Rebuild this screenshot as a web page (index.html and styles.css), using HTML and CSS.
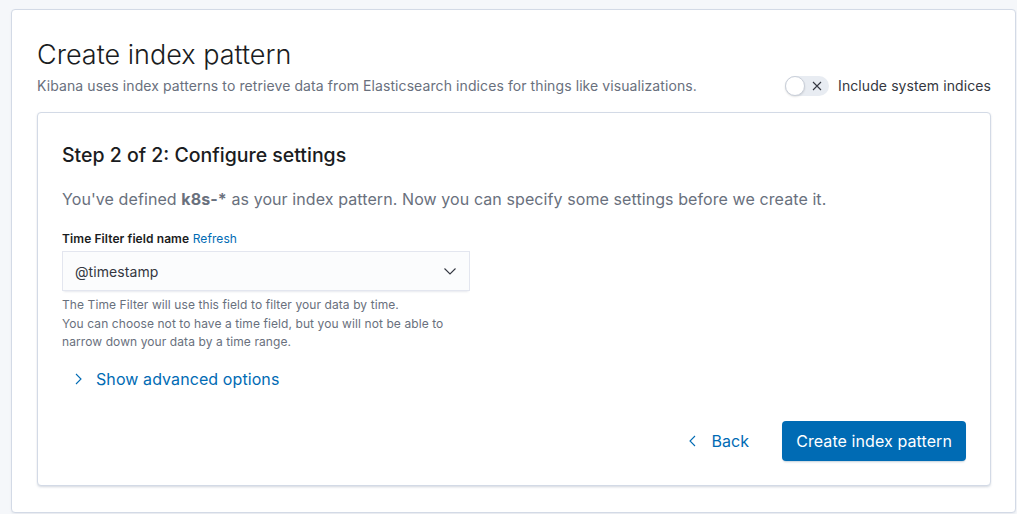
FILE: index.html
```html
<!DOCTYPE html>
<html lang="en">
<head>
<meta charset="utf-8">
<title>Create index pattern</title>
<link rel="stylesheet" href="styles.css">
</head>
<body>
<div class="page">
  <div class="panel outer">
    <div class="header">
      <div class="header-text">
        <h1 class="title">Create index pattern</h1>
        <p class="subtitle">Kibana uses index patterns to retrieve data from Elasticsearch indices for things like visualizations.</p>
      </div>
      <div class="switch">
        <span class="switch-track">
          <span class="switch-knob"></span>
          <svg class="switch-x" width="12" height="12" viewBox="0 0 12 12"><path d="M2 2 L10 10 M10 2 L2 10" stroke="#343741" stroke-width="1.1" fill="none"/></svg>
        </span>
        <span class="switch-label">Include system indices</span>
      </div>
    </div>

    <div class="panel inner">
      <h2 class="step-title">Step 2 of 2: Configure settings</h2>
      <p class="lead">You've defined <strong>k8s-*</strong> as your index pattern. Now you can specify some settings before we create it.</p>

      <div class="field">
        <div class="field-label"><span class="label-text">Time Filter field name</span> <a class="link">Refresh</a></div>
        <div class="select">
          <span class="select-value">@timestamp</span>
          <svg class="select-arrow" width="16" height="16" viewBox="0 0 16 16"><path d="M2.5 5.5 L8 11 L13.5 5.5" stroke="#343741" stroke-width="1.1" fill="none"/></svg>
        </div>
        <div class="help">The Time Filter will use this field to filter your data by time.<br>You can choose not to have a time field, but you will not be able to<br>narrow down your data by a time range.</div>
      </div>

      <div class="advanced">
        <svg width="16" height="16" viewBox="0 0 16 16"><path d="M6 3 L11 8 L6 13" stroke="#006bb4" stroke-width="1.1" fill="none"/></svg>
        <span>Show advanced options</span>
      </div>

      <div class="actions">
        <div class="btn-empty">
          <svg width="16" height="16" viewBox="0 0 16 16"><path d="M10 3 L5 8 L10 13" stroke="#006bb4" stroke-width="1.1" fill="none"/></svg>
          <span>Back</span>
        </div>
        <div class="btn-fill">Create index pattern</div>
      </div>
    </div>
  </div>
</div>
</body>
</html>
```

FILE: styles.css
```css
* { box-sizing: border-box; }
html, body {
  margin: 0;
  padding: 0;
  background: #f5f7fa;
  font-family: Inter, "Noto Sans", sans-serif;
  color: #343741;
  letter-spacing: 0.0055em;
}
.page {
  padding: 9px 1px 1px 11px;
}
.panel {
  background: #fff;
  border: 1px solid #d3dae6;
  border-radius: 4px;
}
.outer {
  height: 504px;
  padding: 27px 24px 24px 25px;
  box-shadow: 0 1px 2px rgba(152,162,179,.15);
}
.header {
  display: flex;
  align-items: flex-end;
  justify-content: space-between;
}
.title {
  margin: 0;
  font-size: 27px;
  line-height: 36px;
  font-weight: 300;
  color: #1a1c21;
  letter-spacing: 0;
}
.subtitle {
  margin: 2px 0 0;
  font-size: 14px;
  line-height: 21px;
  color: #69707d;
}
.switch {
  display: flex;
  align-items: center;
  gap: 9px;
  height: 21px;
}
.switch-track {
  position: relative;
  width: 44px;
  height: 20px;
  border-radius: 10px;
  background: #e8ecf2;
  display: block;
}
.switch-knob {
  position: absolute;
  left: 0;
  top: 0;
  width: 20px;
  height: 20px;
  border-radius: 50%;
  background: #fff;
  border: 1px solid #c9cfd9;
  box-shadow: 0 1px 2px rgba(0,0,0,.12);
}
.switch-x {
  position: absolute;
  left: 26px;
  top: 4px;
}
.switch-label {
  font-size: 14px;
  line-height: 21px;
  color: #343741;
}
.inner {
  margin-top: 16px;
  padding: 28px 24px 24px 24px;
  box-shadow: 0 1px 2px rgba(152,162,179,.25), 0 2px 3px -1px rgba(152,162,179,.2);
}
.step-title {
  margin: 0;
  font-size: 19.5px;
  line-height: 28px;
  font-weight: 500;
  color: #1a1c21;
  letter-spacing: 0;
}
.lead {
  margin: 18px 0 0;
  font-size: 16px;
  line-height: 24px;
  color: #69707d;
}
.lead strong {
  font-weight: 700;
  color: #69707d;
}
.field {
  margin-top: 19px;
}
.field-label {
  font-size: 12px;
  line-height: 18px;
}
.label-text {
  font-weight: 600;
  color: #1a1c21;
}
.link {
  color: #006bb4;
}
.select {
  margin-top: 3px;
  width: 408px;
  height: 40px;
  background: #fbfcfd;
  box-shadow: 0 1px 1px -1px rgba(152,162,179,.2), 0 3px 2px -2px rgba(152,162,179,.2), inset 0 0 0 1px rgba(15,39,118,.1);
  display: flex;
  align-items: center;
  justify-content: space-between;
  padding: 0 12px 0 13px;
}
.select-value {
  font-size: 14px;
  color: #343741;
}
.help {
  margin-top: 5px;
  font-size: 12px;
  line-height: 18.5px;
  color: #69707d;
}
.advanced {
  margin-top: 15px;
  display: flex;
  align-items: center;
  gap: 10px;
  padding-left: 8px;
  height: 24px;
  font-size: 16px;
  color: #006bb4;
}
.actions {
  margin-top: 30px;
  display: flex;
  justify-content: flex-end;
  align-items: center;
  gap: 24px;
}
.btn-empty {
  display: flex;
  align-items: center;
  gap: 10px;
  height: 40px;
  padding: 0 9px;
  font-size: 16px;
  color: #006bb4;
}
.btn-fill {
  height: 40px;
  display: flex;
  align-items: center;
  padding: 0 14px;
  background: #006bb4;
  color: #fff;
  font-size: 16px;
  border-radius: 4px;
  box-shadow: 0 2px 2px -1px rgba(54,97,126,.3);
}
```
